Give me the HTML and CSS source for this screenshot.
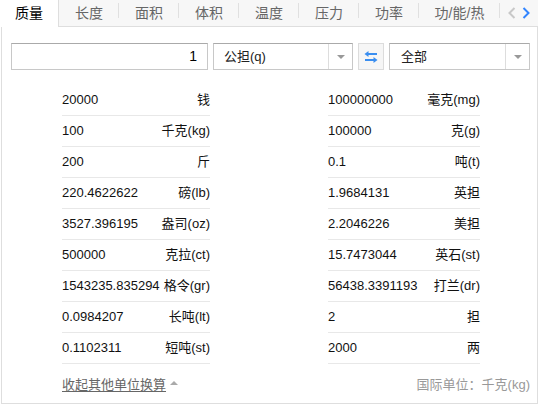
FILE: index.html
```html
<!DOCTYPE html>
<html lang="zh">
<head>
<meta charset="utf-8">
<title>单位换算</title>
<link rel="stylesheet" href="styles.css">
</head>
<body>
<div class="widget">
  <div class="tabs">
    <div class="tab active">质量</div>
    <div class="tab">长度</div>
    <div class="tab">面积</div>
    <div class="tab">体积</div>
    <div class="tab">温度</div>
    <div class="tab">压力</div>
    <div class="tab">功率</div>
    <div class="tab wide">功/能/热</div>
    <div class="nav">
      <svg class="chev" width="8" height="12" viewBox="0 0 8 12"><path d="M6.5 1 L1.5 6 L6.5 11" fill="none" stroke="#c8c8c8" stroke-width="2"/></svg>
      <svg class="chev" width="8" height="12" viewBox="0 0 8 12"><path d="M1.5 1 L6.5 6 L1.5 11" fill="none" stroke="#3385ff" stroke-width="2"/></svg>
    </div>
  </div>
  <div class="body">
    <div class="controls">
      <div class="input">1</div>
      <div class="select s1"><span class="val">公担(q)</span><span class="caret"></span></div>
      <div class="swap">
        <svg width="14" height="12" viewBox="0 0 14 12">
          <path d="M3 3 H13" stroke="#3a8ef0" stroke-width="2" fill="none"/>
          <path d="M0.5 3 L4.5 0 L4.5 6 Z" fill="#3a8ef0"/>
          <path d="M1 9 H11" stroke="#3a8ef0" stroke-width="2" fill="none"/>
          <path d="M13.5 9 L9.5 6 L9.5 12 Z" fill="#3a8ef0"/>
        </svg>
      </div>
      <div class="select s2"><span class="val">全部</span><span class="caret"></span></div>
    </div>
    <div class="results">
      <div class="row"><span class="num">20000</span><span class="unit">钱</span></div>
      <div class="row"><span class="num">100000000</span><span class="unit">毫克(mg)</span></div>
      <div class="row"><span class="num">100</span><span class="unit">千克(kg)</span></div>
      <div class="row"><span class="num">100000</span><span class="unit">克(g)</span></div>
      <div class="row"><span class="num">200</span><span class="unit">斤</span></div>
      <div class="row"><span class="num">0.1</span><span class="unit">吨(t)</span></div>
      <div class="row"><span class="num">220.4622622</span><span class="unit">磅(lb)</span></div>
      <div class="row"><span class="num">1.9684131</span><span class="unit">英担</span></div>
      <div class="row"><span class="num">3527.396195</span><span class="unit">盎司(oz)</span></div>
      <div class="row"><span class="num">2.2046226</span><span class="unit">美担</span></div>
      <div class="row"><span class="num">500000</span><span class="unit">克拉(ct)</span></div>
      <div class="row"><span class="num">15.7473044</span><span class="unit">英石(st)</span></div>
      <div class="row"><span class="num">1543235.835294</span><span class="unit">格令(gr)</span></div>
      <div class="row"><span class="num">56438.3391193</span><span class="unit">打兰(dr)</span></div>
      <div class="row"><span class="num">0.0984207</span><span class="unit">长吨(lt)</span></div>
      <div class="row"><span class="num">2</span><span class="unit">担</span></div>
      <div class="row"><span class="num">0.1102311</span><span class="unit">短吨(st)</span></div>
      <div class="row"><span class="num">2000</span><span class="unit">两</span></div>
    </div>
    <div class="footer">
      <span class="collapse"><span class="link">收起其他单位换算</span><span class="up"></span></span>
      <span class="si">国际单位：千克(kg)</span>
    </div>
  </div>
</div>
</body>
</html>
```

FILE: styles.css
```css
* { box-sizing: border-box; }
html, body { margin: 0; padding: 0; background: #fff; }
body {
  font-family: "Liberation Sans", Arial, "Noto Sans CJK SC", sans-serif;
  color: #222;
  width: 538px;
}
.widget { width: 538px; }

.tabs {
  display: flex;
  height: 27px;
  background: #f7f7f7;
  border-bottom: 1px solid #dedede;
}
.tab {
  position: relative;
  width: 60px;
  height: 26px;
  line-height: 26px;
  text-align: center;
  font-size: 14px;
  color: #666;
}
.tab::after {
  content: "";
  position: absolute;
  right: 0;
  top: 3px;
  width: 1px;
  height: 15px;
  background: #e0e0e0;
}
.tab.active {
  width: 59px;
  height: 27px;
  background: #fff;
  color: #000;
  border-right: 1px solid #dedede;
}
.tab.active::after { display: none; }
.tab.wide { width: 81px; }
.nav {
  flex: 1;
  display: flex;
  align-items: center;
  padding-left: 8px;
  gap: 6px;
  height: 26px;
  padding-bottom: 1px;
}
.chev { display: block; }

.body {
  margin-left: 1px;
  width: 537px;
  height: 377px;
  border: 1px solid #dedede;
  border-top: none;
  padding: 16px 7px 0 9px;
}

.controls {
  display: flex;
  height: 27px;
}
.input {
  width: 197px;
  height: 27px;
  border: 1px solid #c8c8c8;
  border-top-color: #aaa;
  text-align: right;
  padding-right: 10px;
  font-size: 14px;
  line-height: 25px;
  color: #000;
}
.select {
  display: flex;
  height: 27px;
  border: 1px solid #c8c8c8;
  border-top-color: #aaa;
  font-size: 13px;
  line-height: 25px;
  color: #222;
}
.select .val {
  flex: 1;
  padding-left: 10px;
}
.select .caret {
  width: 24px;
  border-left: 1px solid #ddd;
  display: flex;
  align-items: center;
  justify-content: center;
}
.select .caret::before {
  content: "";
  border-left: 4px solid transparent;
  border-right: 4px solid transparent;
  border-top: 4px solid #999;
}
.s1 { width: 140px; margin-left: 5px; }
.s2 { width: 141px; margin-left: 5px; }
.s2 .val { padding-left: 11px; }
.swap {
  width: 26px;
  height: 27px;
  margin-left: 5px;
  border: 1px solid #dcdcdc;
  background: #f6f6f6;
  display: flex;
  align-items: center;
  justify-content: center;
}

.results {
  display: grid;
  grid-template-columns: 148px 152px;
  column-gap: 118px;
  margin-top: 15px;
  margin-left: 51px;
}
.row {
  display: flex;
  justify-content: space-between;
  height: 31px;
  line-height: 30px;
  border-bottom: 1px solid #e8e8e8;
  font-size: 13px;
  color: #111;
}

.footer {
  display: flex;
  justify-content: space-between;
  align-items: center;
  height: 38px;
  padding-left: 51px;
  font-size: 13px;
}
.collapse { display: flex; align-items: center; }
.link {
  color: #666;
  text-decoration: underline;
  text-underline-offset: 2px;
}
.up {
  margin-left: 4px;
  width: 0;
  height: 0;
  border-left: 4px solid transparent;
  border-right: 4px solid transparent;
  border-bottom: 4px solid #aaa;
}
.si { color: #999; }
```
